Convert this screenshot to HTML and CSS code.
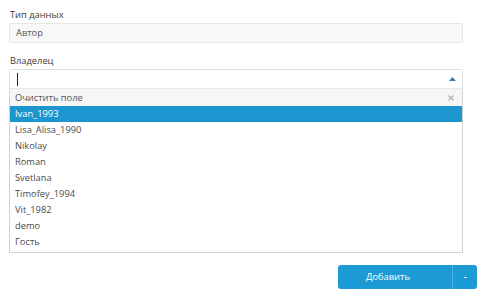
FILE: index.html
```html
<!DOCTYPE html>
<html lang="ru">
<head>
<meta charset="utf-8">
<link rel="stylesheet" href="styles.css">
</head>
<body>
<div class="page">
  <div class="field">
    <div class="label">Тип данных</div>
    <div class="input readonly">Автор</div>
  </div>
  <div class="field">
    <div class="label">Владелец</div>
    <div class="select">
      <span class="caret-text"></span>
      <svg class="arrow" width="7" height="4" viewBox="0 0 7 4"><path d="M0 4 L3.5 0 L7 4 Z" fill="#3b7bb0"/></svg>
    </div>
    <div class="dropdown">
      <div class="clear">Очистить поле<svg class="x" width="6" height="6" viewBox="0 0 6 6"><path d="M0.5 0.5 L5.5 5.5 M5.5 0.5 L0.5 5.5" stroke="#b0b0b0" stroke-width="1.2"/></svg></div>
      <div class="item active">Ivan_1993</div>
      <div class="item">Lisa_Alisa_1990</div>
      <div class="item">Nikolay</div>
      <div class="item">Roman</div>
      <div class="item">Svetlana</div>
      <div class="item">Timofey_1994</div>
      <div class="item">Vit_1982</div>
      <div class="item">demo</div>
      <div class="item">Гость</div>
    </div>
  </div>
  <div class="actions">
    <div class="btn-group">
      <div class="btn-main">Добавить</div>
      <div class="btn-toggle"><span class="dash"></span></div>
    </div>
  </div>
</div>
</body>
</html>
```
FILE: styles.css
```css
* { box-sizing: border-box; }
html, body { margin: 0; padding: 0; background: #fff; }
body {
  font-family: "Open Sans", "Noto Sans", sans-serif;
  font-size: 9.3px;
  color: #444;
}
.page {
  width: 481px;
  height: 296px;
  padding: 9px 4px 0 9px;
}
.field { width: 454px; }
.label {
  height: 12px;
  line-height: 12px;
  padding-left: 1px;
  color: #3a3a3a;
  margin-bottom: 2px;
}
.input {
  height: 20px;
  line-height: 18px;
  border: 1px solid #e6e6e6;
  border-radius: 2px;
  padding-left: 6px;
  margin-bottom: 12px;
}
.readonly { background: #f8f8f8; color: #555; }
.select {
  height: 19px;
  border: 1px solid #dcdcdc;
  border-bottom: none;
  border-radius: 2px 2px 0 0;
  display: flex;
  align-items: center;
  justify-content: space-between;
  padding: 0 6px 0 7px;
}
.caret-text {
  width: 1px;
  height: 13px;
  background: #222;
}
.dropdown {
  border: 1px solid #d4d4d4;
  border-top: 1px solid #e8e8e8;
  padding-bottom: 2px;
}
.clear {
  height: 17px;
  line-height: 17px;
  background: #f6f6f6;
  padding: 0 8px 0 5px;
  display: flex;
  justify-content: space-between;
  align-items: center;
  color: #555;
}
.item {
  height: 16px;
  line-height: 16px;
  padding-left: 5px;
  color: #4a4a4a;
}
.item.active {
  background: #1b96cf;
  color: #fff;
}
.actions {
  display: flex;
  justify-content: flex-end;
  margin-top: 12px;
}
.btn-group {
  display: flex;
  height: 24px;
  border-radius: 3px;
  background: #1b9ad6;
  color: #fff;
}
.btn-main {
  width: 115px;
  line-height: 24px;
  text-align: center;
  padding-right: 14px;
  border-right: 1px solid #4fb3e3;
}
.btn-toggle {
  width: 24px;
  display: flex;
  align-items: center;
  justify-content: center;
}
.dash {
  width: 3px;
  height: 1px;
  background: #e6f4fb;
}
```
